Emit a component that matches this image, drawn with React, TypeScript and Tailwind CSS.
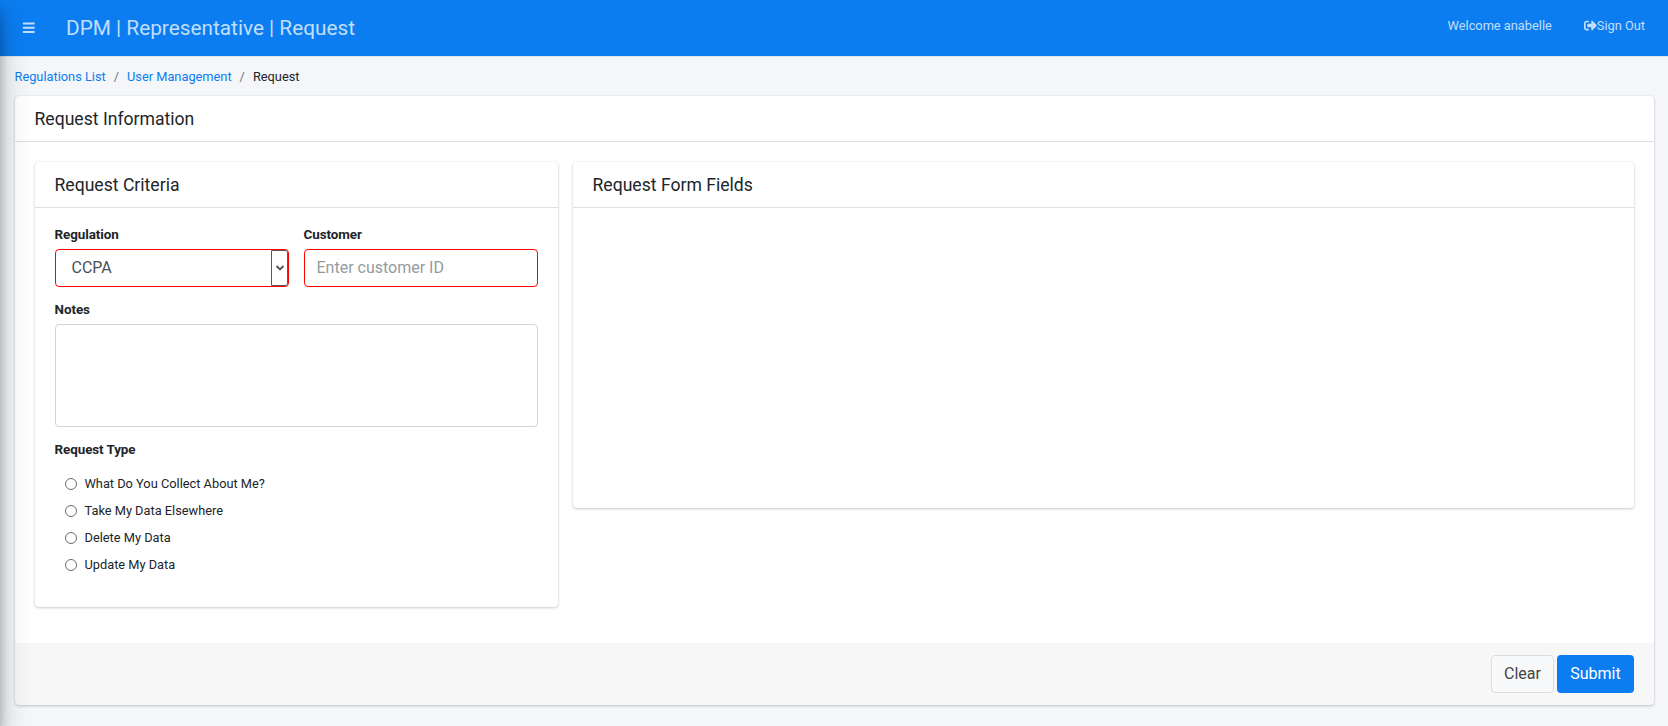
import React, { useState } from 'react';
import { FaBars, FaSignOutAlt } from 'react-icons/fa';

const requestTypes = [
  'What Do You Collect About Me?',
  'Take My Data Elsewhere',
  'Delete My Data',
  'Update My Data',
];

const cardShadow = 'rounded shadow-[0_0_1px_rgba(0,0,0,0.13),0_1px_3px_rgba(0,0,0,0.2)]';

function CardHeader({ title }: { title: string }) {
  return (
    <header className="flex h-[46px] shrink-0 items-center border-b border-black/[0.125] pt-0.5 pr-5 pl-[19.5px]">
      <h3 className="text-[17.6px] leading-[21px]">{title}</h3>
    </header>
  );
}

function Label({ htmlFor, children }: { htmlFor?: string; children: string }) {
  return (
    <label htmlFor={htmlFor} className="mb-1 -ml-[0.4px] block h-[21px] pt-px text-[13.4px] leading-5 font-bold tracking-[-0.08px]">
      {children}
    </label>
  );
}

export default function App() {
  const [selected, setSelected] = useState('');

  return (
    <div className="relative h-[726px] overflow-hidden bg-[#f4f6f9] font-[Roboto,sans-serif] text-[12.8px] text-[#212529]">
      <nav className="flex h-[57px] items-start justify-between border-b border-[#dee2e6] bg-[#0b7df1] pr-[23px] pl-[22px] text-white/75">
        <div className="flex h-14 items-center">
          <FaBars className="mr-[30.5px] size-[13.5px]" />
          <span className="pt-0.5 text-[20.8px]">DPM | Representative | Request</span>
        </div>
        <div className="flex h-[51px] items-center">
          <span className="mr-8">Welcome anabelle</span>
          <a className="flex items-center">
            <FaSignOutAlt className="size-[13px]" />
            Sign Out
          </a>
        </div>
      </nav>

      <ol className="flex h-[39px] items-center px-[14.5px] pt-px">
        <li className="text-[#0b7df1]">Regulations List</li>
        <li className="px-2 text-[#6c757d]">/</li>
        <li className="text-[#0b7df1]">User Management</li>
        <li className="px-2 text-[#6c757d]">/</li>
        <li>Request</li>
      </ol>

      <main className={`mr-[14px] ml-[15px] flex h-[609px] flex-col overflow-hidden bg-white ${cardShadow}`}>
        <CardHeader title="Request Information" />
        <div className="flex flex-1 items-start gap-[15px] p-5">
          <section className={`h-[445px] w-[523px] bg-white ${cardShadow}`}>
            <CardHeader title="Request Criteria" />
            <form className="px-5 pt-4">
              <div className="grid grid-cols-2 gap-[15px]">
                <div>
                  <Label htmlFor="regulation">Regulation</Label>
                  <button
                    id="regulation"
                    type="button"
                    className="flex h-[38px] w-full overflow-hidden rounded border border-[#f00] text-left text-base text-[#495057]"
                  >
                    <span className="flex-1 self-center pl-[15.5px]">CCPA</span>
                    <span className="flex h-9 w-[17px] items-center justify-center rounded-r-[3px] border border-[#5a5a5a]">
                      <svg viewBox="0 0 8 6" className="h-1.5 w-2" fill="none" stroke="#555" strokeWidth="2">
                        <path d="M.6 1 4 4.4 7.4 1" />
                      </svg>
                    </span>
                  </button>
                </div>
                <div>
                  <Label htmlFor="customer">Customer</Label>
                  <input
                    id="customer"
                    placeholder="Enter customer ID"
                    className="block h-[38px] w-full rounded border border-[#f00] px-[11.5px] pb-0.5 text-base placeholder:text-[#939ba2]"
                  />
                </div>
              </div>
              <div className="mt-3">
                <Label htmlFor="notes">Notes</Label>
                <textarea id="notes" className="block h-[103px] w-full resize-none rounded border border-[#ced4da]" />
              </div>
              <div className="mt-3">
                <Label>Request Type</Label>
                <div className="pt-1.5 pl-2.5">
                  {requestTypes.map((type) => (
                    <label key={type} className="flex h-[27px] items-center">
                      <input
                        type="radio"
                        name="type"
                        checked={selected === type}
                        onChange={() => setSelected(type)}
                        className="mr-[7.5px] size-3 appearance-none rounded-full border border-[#6b6b6b] checked:border-4"
                      />
                      {type}
                    </label>
                  ))}
                </div>
              </div>
            </form>
          </section>
          <section className={`h-[346px] flex-1 bg-white ${cardShadow}`}>
            <CardHeader title="Request Form Fields" />
          </section>
        </div>
        <footer className="flex h-[62px] items-center justify-end gap-[3px] bg-black/[0.03] px-5 text-base">
          <button className="h-[38px] w-[63px] rounded border border-[#ddd] bg-[#f8f9fa] text-[#444]">Clear</button>
          <button className="h-[38px] w-[77px] rounded bg-[#0b7df1] text-white">Submit</button>
        </footer>
      </main>

      <aside className="absolute top-0 -left-[250px] h-[726px] w-[250px] shadow-[0_14px_28px_rgba(0,0,0,0.25),0_10px_10px_rgba(0,0,0,0.22)]" />
    </div>
  );
}
